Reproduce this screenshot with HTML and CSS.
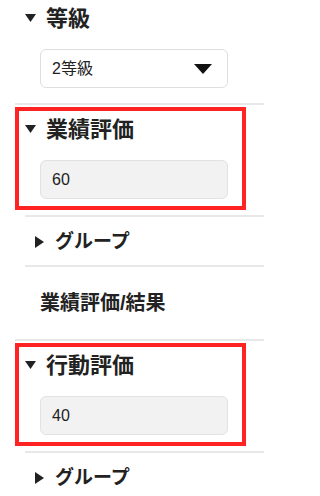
FILE: index.html
```html
<!DOCTYPE html>
<html lang="ja">
<head>
<meta charset="utf-8">
<link rel="stylesheet" href="styles.css">
</head>
<body>
<div class="panel">
  <div class="branch branch-top">
    <section class="node">
      <div class="node-box">
        <div class="head">
          <svg class="caret-down" viewBox="0 0 11 8"><polygon points="0,0 11,0 5.5,8"/></svg>
          <span class="head-label">等級</span>
        </div>
        <div class="field select">
          <span class="field-text">2等級</span>
          <svg class="select-arrow" viewBox="0 0 18 10"><polygon points="0,0 18,0 9,10"/></svg>
        </div>
      </div>
    </section>
  </div>
  <div class="branch">
    <section class="node">
      <div class="node-box highlight">
        <div class="head">
          <svg class="caret-down" viewBox="0 0 11 8"><polygon points="0,0 11,0 5.5,8"/></svg>
          <span class="head-label">業績評価</span>
        </div>
        <div class="field input"><span class="field-text">60</span></div>
      </div>
      <div class="children">
        <div class="row group">
          <svg class="caret-right" viewBox="0 0 9 12"><polygon points="0,0 9,6 0,12"/></svg>
          <span class="row-label">グループ</span>
        </div>
        <div class="row leaf"><span class="leaf-label">業績評価/結果</span></div>
      </div>
    </section>
  </div>
  <div class="branch">
    <section class="node">
      <div class="node-box highlight">
        <div class="head">
          <svg class="caret-down" viewBox="0 0 11 8"><polygon points="0,0 11,0 5.5,8"/></svg>
          <span class="head-label">行動評価</span>
        </div>
        <div class="field input"><span class="field-text">40</span></div>
      </div>
      <div class="children">
        <div class="row group">
          <svg class="caret-right" viewBox="0 0 9 12"><polygon points="0,0 9,6 0,12"/></svg>
          <span class="row-label">グループ</span>
        </div>
      </div>
    </section>
  </div>
</div>
</body>
</html>
```

FILE: styles.css
```css
* { box-sizing: border-box; }
html, body { margin: 0; padding: 0; background: #fff; }
body {
  font-family: "Liberation Sans", "Noto Sans CJK JP", "Noto Sans", sans-serif;
  color: #222;
  width: 264px;
  overflow: hidden;
}
.panel { width: 264px; }
.branch { margin-left: 15px; border-top: 2px solid #e8e8e8; }
.branch-top { border-top: none; }
.node-box {
  margin: 2px 18px 5px 0;
  border: 4px solid transparent;
  padding: 0 0 7px 6px;
}
.branch-top .node-box { margin-top: -4px; margin-bottom: 4px; }
.node-box.highlight { border-color: #ff2323; }
.head {
  height: 38px;
  display: flex;
  align-items: center;
  gap: 10px;
}
.caret-down { width: 11px; height: 8px; fill: #222; flex: none; margin-top: -2px; }
.head-label { font-size: 22px; font-weight: bold; line-height: 1; }
.field {
  margin: 11px 14px 0 15px;
  height: 39px;
  border-radius: 6px;
  display: flex;
  align-items: center;
  padding: 0 15px 0 11px;
}
.field-text { font-size: 16px; line-height: 1; }
.select { border: 1px solid #dedede; background: #fff; justify-content: space-between; }
.select-arrow { width: 18px; height: 10px; fill: #111; }
.input { border: 1px solid #e2e2e2; background: #f2f2f2; }
.children { margin-left: 10px; }
.row { border-top: 2px solid #e8e8e8; display: flex; align-items: center; }
.group { height: 50px; padding-left: 10px; gap: 11px; }
.caret-right { width: 9px; height: 12px; fill: #222; flex: none; margin-top: 2px; }
.row-label { font-size: 19px; font-weight: bold; line-height: 1; }
.leaf { height: 74px; padding-left: 15px; }
.leaf-label { font-size: 20px; font-weight: bold; line-height: 1; }
```
